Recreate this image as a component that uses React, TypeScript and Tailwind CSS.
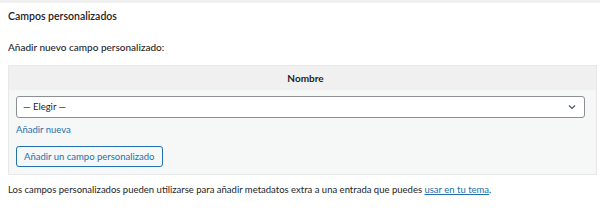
export default function App() {
  return (
    <div className="w-[600px] h-[211px] bg-white font-['Lato',sans-serif] text-[#1d2327] overflow-hidden">
      {/* Metabox top edge */}
      <div className="h-[3px] bg-[#f0f0f1]" />

      {/* Header */}
      <div className="h-[27px] flex items-center px-[8px]">
        <h2 className="text-[10.5px] font-semibold leading-none">Campos personalizados</h2>
      </div>

      <div className="px-[8px] pt-[12px]">
        <p className="text-[10px] font-medium leading-none mb-[13px]">Añadir nuevo campo personalizado:</p>

        {/* Table */}
        <div className="w-[589px] border border-[#e8e8ea] bg-[#f6f7f7]">
          <div className="h-[24px] bg-[#f0f0f1] flex items-center justify-center">
            <span className="text-[10px] font-bold ml-[6px]">Nombre</span>
          </div>
          <div className="px-[7px] pt-[6px] pb-[7px]">
            <div className="h-[22px] w-[569px] border border-[#8c8f94] rounded-[3px] bg-white flex items-center justify-between pl-[6px] pr-[7px]">
              <span className="text-[9.5px]">— Elegir —</span>
              <svg className="w-[10px] h-[10px]" viewBox="0 0 10 10" fill="none" stroke="#50575e" strokeWidth={1.2}>
                <path d="M2 3.5l3 3 3-3" />
              </svg>
            </div>
            <div className="h-[24px] flex items-center">
              <a className="text-[9.5px] text-[#2271b1]">Añadir nueva</a>
            </div>
            <button className="mt-[1px] h-[21px] px-[7px] border border-[#2271b1] rounded-[3px] bg-[#f6f7f7] text-[9.5px] text-[#2271b1] leading-none">
              Añadir un campo personalizado
            </button>
          </div>
        </div>

        {/* Footer note */}
        <p className="text-[9.5px] leading-none mt-[10px]">
          Los campos personalizados pueden utilizarse para añadir metadatos extra a una entrada que puedes{' '}
          <a className="text-[#2271b1] underline">usar en tu tema</a>.
        </p>
      </div>
    </div>
  );
}
